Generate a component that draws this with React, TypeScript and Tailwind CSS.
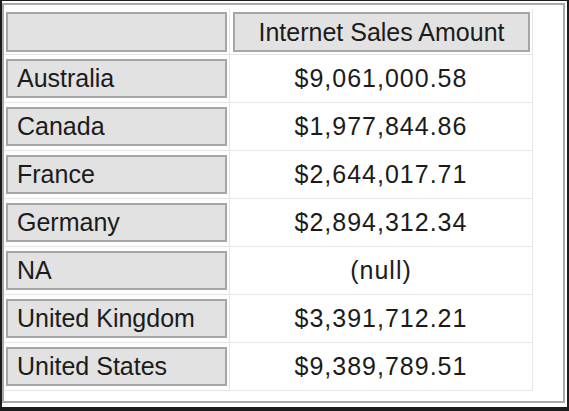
const rows = [
  { name: "Australia", amount: "$9,061,000.58" },
  { name: "Canada", amount: "$1,977,844.86" },
  { name: "France", amount: "$2,644,017.71" },
  { name: "Germany", amount: "$2,894,312.34" },
  { name: "NA", amount: "(null)" },
  { name: "United Kingdom", amount: "$3,391,712.21" },
  { name: "United States", amount: "$9,389,789.51" },
]

function HeaderBox({ children, center }: { children?: React.ReactNode; center?: boolean }) {
  return (
    <div
      className={
        center
          ? "h-full border-2 border-[#a6a6a6] bg-[#e2e2e2] flex items-center justify-center"
          : "h-full border-2 border-[#a6a6a6] bg-[#e2e2e2] flex items-center pl-[9px]"
      }
    >
      {children}
    </div>
  )
}

export default function App() {
  return (
    <div className="w-[569px] h-[411px] box-border bg-white border-l-2 border-t border-r-2 border-b-4 border-[#1c1c1c] font-['Liberation_Sans',Arial,sans-serif] text-[25px] leading-none text-[#1b1b1b]">
      <div className="mt-[2px] w-[563px] h-[400px] box-border border-2 border-[#a9a9a9] bg-white pt-[4px]">
        <div className="grid grid-cols-[226px_303px] grid-rows-[46px_repeat(7,48px)] w-fit">
          {/* column headers */}
          <div className="border-r border-b border-[#e6e6e6] pl-[2px] pr-[2px] pt-[3px] pb-[2px]">
            <HeaderBox />
          </div>
          <div className="border-r border-b border-[#e6e6e6] pl-[3px] pr-[2px] pt-[3px] pb-[2px]">
            <HeaderBox center>Internet Sales Amount</HeaderBox>
          </div>

          {/* data rows */}
          {rows.map((row) => (
            <>
              <div key={row.name} className="border-r border-b border-[#e6e6e6] pl-[2px] pr-[2px] py-[4px]">
                <HeaderBox>{row.name}</HeaderBox>
              </div>
              <div key={row.name + "-v"} className="border-r border-b border-[#e6e6e6] flex items-center justify-center tracking-[1px]">
                {row.amount}
              </div>
            </>
          ))}
        </div>
      </div>
    </div>
  )
}
